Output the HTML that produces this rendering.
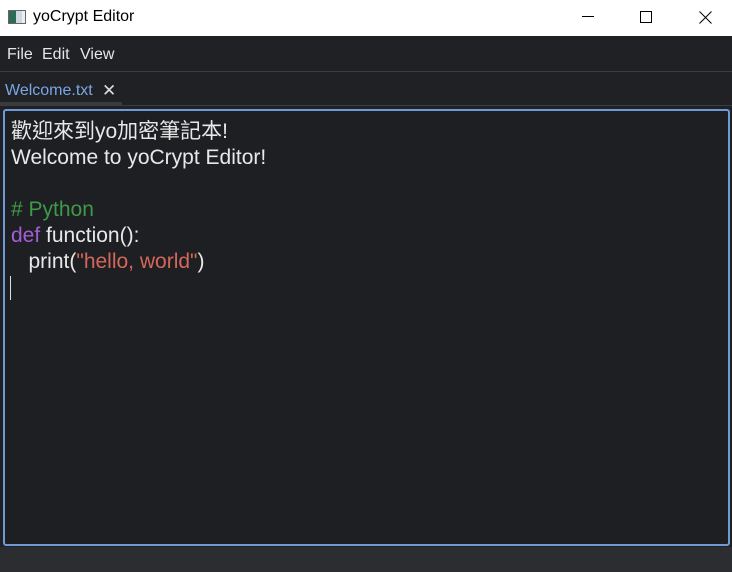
<!DOCTYPE html>
<html><head><meta charset="utf-8"><style>
*{margin:0;padding:0;box-sizing:border-box}
body{width:732px;height:572px;overflow:hidden;background:#202124;font-family:"Liberation Sans","Noto Sans CJK TC",sans-serif;position:relative}
.title{position:absolute;left:0;top:0;width:732px;height:36px;background:#fff;color:#000;font-size:16px}
.title .t{position:absolute;left:33px;top:8px}
.ico{position:absolute;left:8px;top:10px;width:18px;height:14px;border:1px solid #666;background:linear-gradient(90deg,#2d6a5a 0 45%,#cfd8dc 45% 80%,#eee 80%)}
.menu{position:absolute;top:36px;left:0;width:732px;height:36px;border-bottom:1px solid #3c3d40;color:#e6e6e6;font-size:16px}
.menu span{position:absolute;top:10px}
.tab{position:absolute;left:5px;top:82px;color:#7aa6e6;font-size:16px}
.tabx{position:absolute;left:102px;top:81px;color:#ddd;font-size:17px}
.tabline{position:absolute;left:0;top:102px;width:122px;height:3px;background:#3a3b3e}
.sep{position:absolute;left:0;top:105px;width:732px;height:1px;background:#3a3b3e}
.ed{position:absolute;left:3px;top:109px;width:727px;height:437px;border:2px solid #6f9ad6;border-radius:3px;background:#1e1f22}
.code{position:absolute;left:11px;top:119px;color:#e8e8e8;font-size:21px;line-height:26px;white-space:pre}
.cm{color:#3e9a48}.kw{color:#a35ed6}.st{color:#d4675a}
.cur{position:absolute;left:10px;top:276px;width:1px;height:24px;background:#ddd}
.status{position:absolute;left:0;top:547px;width:732px;height:25px;background:#2b2d30}
</style></head><body>
<div class="title"><div class="ico"></div><span class="t">yoCrypt Editor</span>
<svg style="position:absolute;left:560px;top:0" width="172" height="36"><path d="M22 16.5H34" stroke="#000" stroke-width="1"/><rect x="80.5" y="11.5" width="11" height="11" fill="none" stroke="#000"/><path d="M139.5 11.5L151.5 23.5M151.5 11.5L139.5 23.5" stroke="#000"/></svg></div>
<div class="menu"><span style="left:7px">File</span><span style="left:42px">Edit</span><span style="left:80px">View</span></div>
<div class="tab">Welcome.txt</div><div class="tabx">✕</div>
<div class="tabline"></div><div class="sep"></div>
<div class="ed"></div>
<div class="code">歡迎來到yo加密筆記本!
Welcome to yoCrypt Editor!

<span class="cm"># Python</span>
<span class="kw">def</span> function():
   print(<span class="st">"hello, world"</span>)</div>
<div class="cur"></div>
<div class="status"></div>
</body></html>
